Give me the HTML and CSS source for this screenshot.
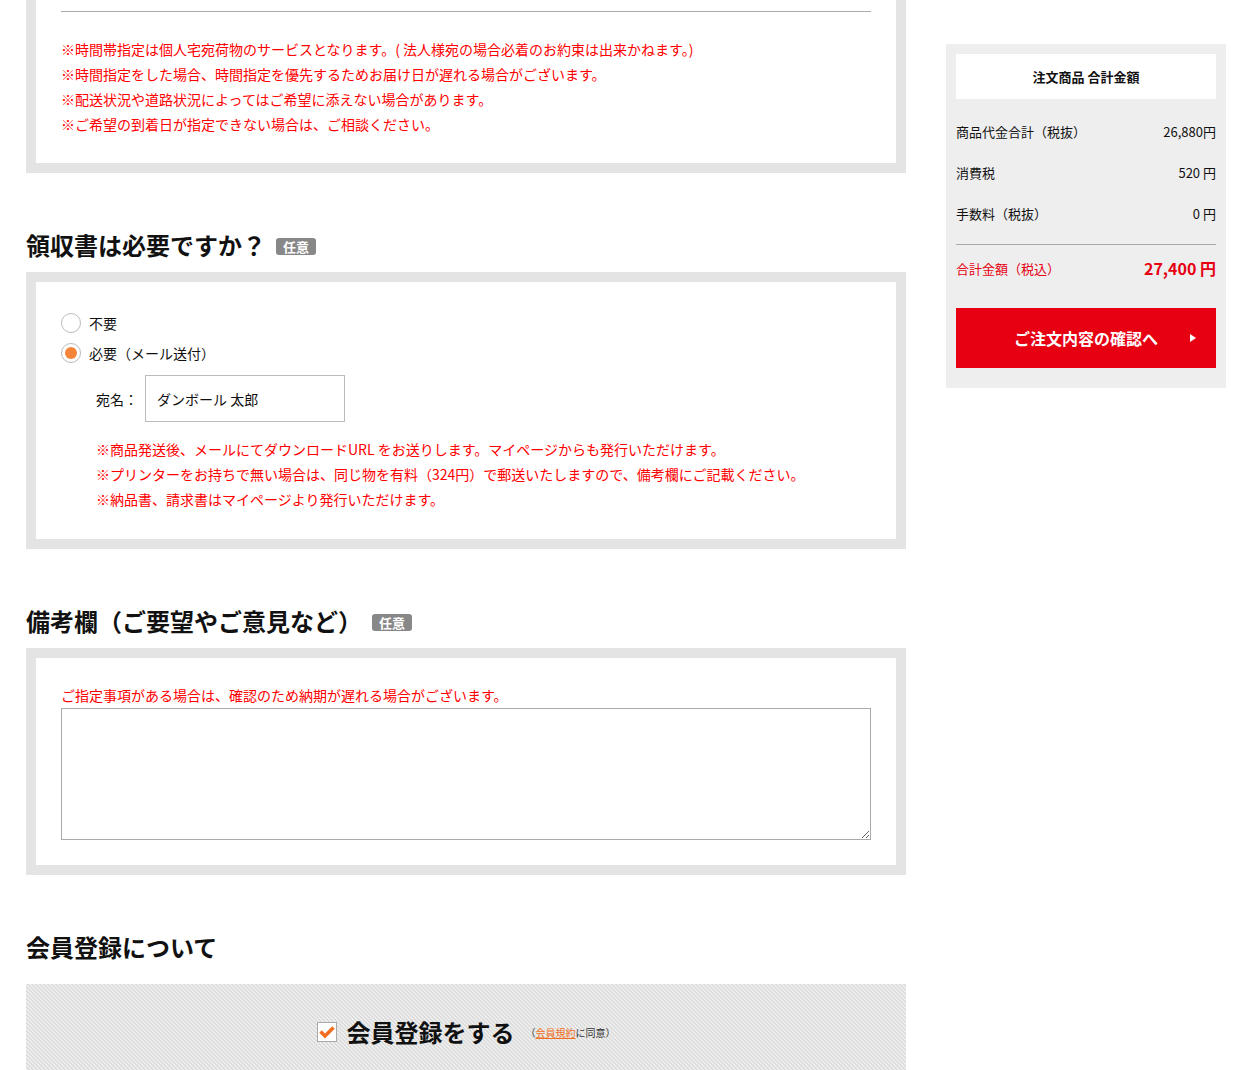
FILE: index.html
```html
<!DOCTYPE html>
<html lang="ja">
<head>
<meta charset="utf-8">
<title>ご注文手続き</title>
<link rel="stylesheet" href="styles.css">
</head>
<body>
<div class="page">
  <main class="main">
    <section class="box box--cut">
      <hr class="rule">
      <ul class="notes">
        <li>※時間帯指定は個人宅宛荷物のサービスとなります。( 法人様宛の場合必着のお約束は出来かねます。)</li>
        <li>※時間指定をした場合、時間指定を優先するためお届け日が遅れる場合がございます。</li>
        <li>※配送状況や道路状況によってはご希望に添えない場合があります。</li>
        <li>※ご希望の到着日が指定できない場合は、ご相談ください。</li>
      </ul>
    </section>

    <h2 class="sec-title">領収書は必要ですか？<span class="badge">任意</span></h2>
    <section class="box box--receipt">
      <label class="radio"><span class="radio-mark"></span>不要</label>
      <label class="radio"><span class="radio-mark radio-mark--on"></span>必要（メール送付）</label>
      <div class="addressee">
        <span class="addressee-label">宛名：</span>
        <input class="text-input" type="text" value="ダンボール 太郎">
      </div>
      <ul class="notes notes--indent">
        <li>※商品発送後、メールにてダウンロードURL をお送りします。マイページからも発行いただけます。</li>
        <li>※プリンターをお持ちで無い場合は、同じ物を有料（324円）で郵送いたしますので、備考欄にご記載ください。</li>
        <li>※納品書、請求書はマイページより発行いただけます。</li>
      </ul>
    </section>

    <h2 class="sec-title">備考欄（ご要望やご意見など）<span class="badge">任意</span></h2>
    <section class="box box--remarks">
      <p class="notes-line">ご指定事項がある場合は、確認のため納期が遅れる場合がございます。</p>
      <textarea class="remarks"></textarea>
    </section>

    <h2 class="sec-title sec-title--member">会員登録について</h2>
    <section class="member">
      <span class="checkbox">
        <svg width="16" height="14" viewBox="0 0 16 14"><polyline points="1.5,6.5 6,11 14.5,2.5" fill="none" stroke="#f26f21" stroke-width="3.6"/></svg>
      </span>
      <span class="member-label">会員登録をする</span>
      <span class="member-agree">（<a href="#" class="member-link">会員規約</a>に同意）</span>
    </section>
  </main>

  <aside class="side">
    <div class="side-head">注文商品 合計金額</div>
    <div class="side-list">
      <div class="side-row"><span>商品代金合計（税抜）</span><span>26,880円</span></div>
      <div class="side-row"><span>消費税</span><span>520 円</span></div>
      <div class="side-row"><span>手数料（税抜）</span><span>0 円</span></div>
    </div>
    <div class="side-total"><span>合計金額（税込）</span><span class="side-total-price">27,400 円</span></div>
    <a href="#" class="side-btn">ご注文内容の確認へ<span class="side-btn-arrow"></span></a>
  </aside>
</div>
</body>
</html>
```

FILE: styles.css
```css
* { box-sizing: border-box; }

html, body {
  margin: 0;
  padding: 0;
  background: #fff;
}

body {
  font-family: "Noto Sans CJK JP", "Noto Sans", sans-serif;
  color: #111;
  font-size: 14px;
}

.page {
  display: flex;
  gap: 40px;
  padding: 0 26px;
  align-items: flex-start;
}

.main {
  width: 880px;
  flex: none;
}

.box {
  border: 10px solid #e4e4e4;
  background: #fff;
  padding: 25px;
}

.box--cut {
  border-top: 0;
  padding-top: 11px;
  padding-bottom: 26px;
}

.rule {
  border: 0;
  border-top: 1px solid #aaa;
  margin: 0 0 25px;
  height: 0;
}

.notes {
  list-style: none;
  margin: 0;
  padding: 0;
  color: #f00;
  font-size: 14px;
  line-height: 25px;
}

.notes--indent {
  margin-top: 15px;
  padding-left: 35px;
}

.sec-title {
  display: flex;
  align-items: center;
  height: 36px;
  font-size: 24px;
  line-height: 36px;
  font-weight: 700;
  margin: 54px 0 9px;
  color: #111;
}

.sec-title--member {
  margin-bottom: 19px;
}

.badge {
  display: block;
  margin-left: 10px;
  margin-top: 3px;
  background: #888;
  color: #fff;
  font-size: 13px;
  font-weight: 700;
  line-height: 17px;
  height: 17px;
  padding: 0 7px;
  border-radius: 3px;
}

.box--receipt {
  padding-top: 26px;
  padding-bottom: 27px;
}

.radio {
  display: flex;
  align-items: center;
  gap: 8px;
  height: 30px;
  font-size: 14px;
}

.radio-mark {
  width: 20px;
  height: 20px;
  border: 1px solid #bbb;
  border-radius: 50%;
  background: #fff;
  display: flex;
  align-items: center;
  justify-content: center;
}

.radio-mark--on::after {
  content: "";
  width: 12px;
  height: 12px;
  border-radius: 50%;
  background: #f5843a;
}

.addressee {
  display: flex;
  align-items: center;
  gap: 7px;
  margin-top: 7px;
  padding-left: 35px;
}

.addressee-label {
  font-size: 14px;
}

.text-input {
  width: 200px;
  height: 47px;
  border: 1px solid #bbb;
  padding: 0 11px;
  font: inherit;
  font-size: 14px;
  color: #111;
  outline: none;
}

.box--remarks {
  padding-top: 25px;
}

.notes-line {
  margin: 0;
  color: #f00;
  font-size: 14px;
  line-height: 25px;
}

.remarks {
  display: block;
  width: 100%;
  height: 132px;
  border: 1px solid #aaa;
  margin: 0;
  font: inherit;
  resize: both;
}

.member {
  display: flex;
  align-items: center;
  justify-content: center;
  gap: 10px;
  padding: 28px 0 40px;
  background-color: #eeeeee;
  background-image: linear-gradient(45deg, #dcdcdc 25%, transparent 25%, transparent 50%, #dcdcdc 50%, #dcdcdc 75%, transparent 75%);
  background-size: 4px 4px;
}

.checkbox {
  width: 20px;
  height: 20px;
  border: 1px solid #aaa;
  background: #fff;
  display: flex;
  align-items: center;
  justify-content: center;
}

.member-label {
  font-size: 24px;
  font-weight: 700;
  line-height: 40px;
  color: #111;
}

.member-agree {
  font-size: 10px;
  color: #333;
  margin-left: 1px;
}

.member-link {
  color: #f26f21;
  text-decoration: underline;
}

.side {
  width: 280px;
  flex: none;
  margin-top: 44px;
  background: #eee;
  padding: 10px 10px 20px;
}

.side-head {
  background: #fff;
  height: 45px;
  line-height: 45px;
  text-align: center;
  font-size: 13px;
  font-weight: 700;
  color: #111;
}

.side-list {
  margin-top: 12px;
  padding-bottom: 10px;
  border-bottom: 1px solid #aaa;
}

.side-row {
  display: flex;
  justify-content: space-between;
  align-items: center;
  height: 41px;
  font-size: 13px;
  color: #111;
}

.side-total {
  display: flex;
  justify-content: space-between;
  align-items: center;
  height: 46px;
  color: #e60012;
  font-size: 13px;
}

.side-total-price {
  font-size: 16px;
  font-weight: 700;
}

.side-btn {
  position: relative;
  display: block;
  margin-top: 17px;
  height: 60px;
  line-height: 60px;
  background: #e60012;
  color: #fff;
  text-align: center;
  font-size: 16px;
  font-weight: 700;
  text-decoration: none;
}

.side-btn-arrow {
  position: absolute;
  right: 20px;
  top: 26px;
  width: 0;
  height: 0;
  border-left: 6px solid #fff;
  border-top: 4px solid transparent;
  border-bottom: 4px solid transparent;
}
```
